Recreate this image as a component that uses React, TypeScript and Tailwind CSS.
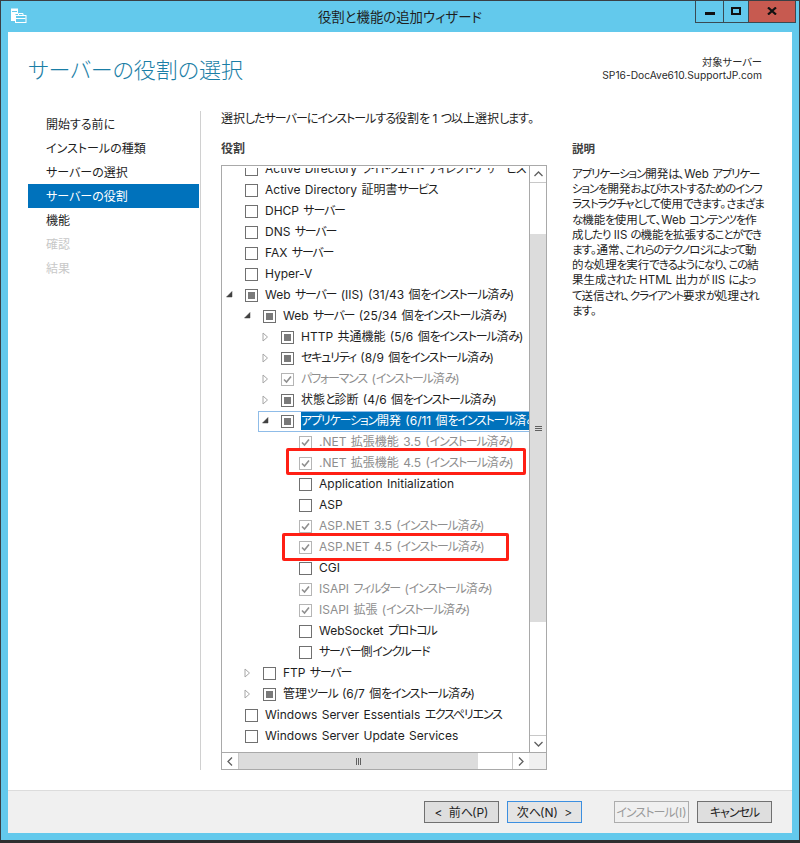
type Check = 'none' | 'mixed' | 'checked';
type Row = {
  level: number;
  label: string;
  check: Check;
  arrow?: 'open' | 'closed';
  disabled?: boolean;
  selected?: boolean;
};

const rows: Row[] = [
  { level: 0, label: 'Active Directory ライトウェイト ディレクトリ サービス', check: 'none' },
  { level: 0, label: 'Active Directory 証明書サービス', check: 'none' },
  { level: 0, label: 'DHCP サーバー', check: 'none' },
  { level: 0, label: 'DNS サーバー', check: 'none' },
  { level: 0, label: 'FAX サーバー', check: 'none' },
  { level: 0, label: 'Hyper-V', check: 'none' },
  { level: 0, label: 'Web サーバー (IIS) (31/43 個をインストール済み)', check: 'mixed', arrow: 'open' },
  { level: 1, label: 'Web サーバー (25/34 個をインストール済み)', check: 'mixed', arrow: 'open' },
  { level: 2, label: 'HTTP 共通機能 (5/6 個をインストール済み)', check: 'mixed', arrow: 'closed' },
  { level: 2, label: 'セキュリティ (8/9 個をインストール済み)', check: 'mixed', arrow: 'closed' },
  { level: 2, label: 'パフォーマンス (インストール済み)', check: 'checked', arrow: 'closed', disabled: true },
  { level: 2, label: '状態と診断 (4/6 個をインストール済み)', check: 'mixed', arrow: 'closed' },
  { level: 2, label: 'アプリケーション開発 (6/11 個をインストール済み)', check: 'mixed', arrow: 'open', selected: true },
  { level: 3, label: '.NET 拡張機能 3.5 (インストール済み)', check: 'checked', disabled: true },
  { level: 3, label: '.NET 拡張機能 4.5 (インストール済み)', check: 'checked', disabled: true },
  { level: 3, label: 'Application Initialization', check: 'none' },
  { level: 3, label: 'ASP', check: 'none' },
  { level: 3, label: 'ASP.NET 3.5 (インストール済み)', check: 'checked', disabled: true },
  { level: 3, label: 'ASP.NET 4.5 (インストール済み)', check: 'checked', disabled: true },
  { level: 3, label: 'CGI', check: 'none' },
  { level: 3, label: 'ISAPI フィルター (インストール済み)', check: 'checked', disabled: true },
  { level: 3, label: 'ISAPI 拡張 (インストール済み)', check: 'checked', disabled: true },
  { level: 3, label: 'WebSocket プロトコル', check: 'none' },
  { level: 3, label: 'サーバー側インクルード', check: 'none' },
  { level: 1, label: 'FTP サーバー', check: 'none', arrow: 'closed' },
  { level: 1, label: '管理ツール (6/7 個をインストール済み)', check: 'mixed', arrow: 'closed' },
  { level: 0, label: 'Windows Server Essentials エクスペリエンス', check: 'none' },
  { level: 0, label: 'Windows Server Update Services', check: 'none' },
];

const steps = [
  { label: '開始する前に' },
  { label: 'インストールの種類' },
  { label: 'サーバーの選択' },
  { label: 'サーバーの役割', active: true },
  { label: '機能' },
  { label: '確認', disabled: true },
  { label: '結果', disabled: true },
];

const description = [
  'アプリケーション開発は、Web アプリケー',
  'ションを開発およびホストするためのインフ',
  'ラストラクチャとして使用できます。さまざま',
  'な機能を使用して、Web コンテンツを作',
  '成したり IIS の機能を拡張することができ',
  'ます。通常、これらのテクノロジによって動',
  '的な処理を実行できるようになり、この結',
  '果生成された HTML 出力が IIS によっ',
  'て送信され、クライアント要求が処理され',
  'ます。',
];

// kana are much narrower than kanji in the reference font, so squeeze only those runs
function Squeezed({ text, kana }: { text: string; kana: string }) {
  const parts = text.split(/([\u3040-\u30ff]+)/);
  return (
    <>
      {parts.map((part, i) =>
        i % 2 === 1 ? (
          <span key={i} className={kana}>
            {part}
          </span>
        ) : (
          part
        ),
      )}
    </>
  );
}

function CheckBox({ check, disabled }: { check: Check; disabled?: boolean }) {
  return (
    <span
      className={`mt-[2px] flex h-[13px] w-[13px] shrink-0 items-center justify-center border bg-white ${
        disabled ? 'border-[#b5b5b5]' : 'border-[#707070]'
      }`}
    >
      {check === 'mixed' && <span className="h-[7px] w-[7px] bg-[#7a7a7a]" />}
      {check === 'checked' && (
        <svg width="11" height="11" viewBox="0 0 11 11" fill="none">
          <path d="M2 5.5 L4.5 8 L9 2.5" stroke="#8f8f8f" strokeWidth="1.6" />
        </svg>
      )}
    </span>
  );
}

function TreeArrow({ arrow }: { arrow?: 'open' | 'closed' }) {
  if (arrow === 'open') {
    return (
      <svg width="7" height="7" viewBox="0 0 7 7" className="shrink-0">
        <path d="M6 0.5 V6 H0.5 Z" fill="#404040" stroke="#404040" strokeWidth="0.5" />
      </svg>
    );
  }
  if (arrow === 'closed') {
    return (
      <svg width="7" height="10" viewBox="0 0 7 10" className="shrink-0">
        <path d="M1 1 L5.5 5 L1 9 Z" fill="#fff" stroke="#a6a6a6" />
      </svg>
    );
  }
  return <span className="w-[7px] shrink-0" />;
}

function TreeRow({ row }: { row: Row }) {
  const indent = ['pl-[4px]', 'pl-[22px]', 'pl-[40px]', 'pl-[58px]'][row.level];
  return (
    <div className={`flex h-[21px] items-center whitespace-nowrap [word-spacing:1px] ${indent}`}>
      <span className="flex w-[19px] shrink-0 items-center">
        <TreeArrow arrow={row.arrow} />
      </span>
      <CheckBox check={row.check} disabled={row.disabled} />
      <span
        className={`ml-[7px] ${row.disabled ? 'text-[#8e8e8e]' : 'text-[#1e1e1e]'} ${
          row.selected ? 'bg-[#0072bc] text-white' : ''
        }`}
      >
        <Squeezed text={row.label} kana="tracking-[-1.2px]" />
      </span>
    </div>
  );
}

function ScrollButton({ d, className }: { d: string; className: string }) {
  return (
    <div className={`flex shrink-0 items-center justify-center bg-white ${className}`}>
      <svg width="9" height="6" viewBox="0 0 9 6" fill="none">
        <path d={d} stroke="#606060" strokeWidth="1.3" />
      </svg>
    </div>
  );
}

function WizardButton({ label, state }: { label: string; state?: 'focus' | 'disabled' }) {
  const cls =
    state === 'focus'
      ? 'border-[#3c8fe0] bg-[#e4e4e4] text-[#1e1e1e]'
      : state === 'disabled'
        ? 'border-[#adadad] bg-[#f0f0f0] text-[#9a9a9a]'
        : 'border-[#707070] bg-[#dedede] text-[#1e1e1e]';
  return (
    <div
      className={`flex h-[22px] w-[75px] items-center justify-center whitespace-nowrap border pt-[2px] text-[12px] [word-spacing:3px] ${cls}`}
    >
      <Squeezed text={label} kana="tracking-[-1px]" />
    </div>
  );
}

export default function App() {
  return (
    <div className="h-[843px] w-[800px] overflow-hidden bg-[#2f2f2f] pb-[3px] font-['Inter','Noto_Sans_CJK_JP',sans-serif] text-[12px] [font-feature-settings:'palt']">
      <div className="flex h-[840px] flex-col border border-b-0 border-[#3a3f44] bg-[#63c9ec] px-[7px] pb-[7px]">
        {/* Title bar */}
        <div className="relative flex h-[31px] shrink-0 items-center justify-center pt-[1px] text-[13.4px] text-[#1e1e1e]">
          <svg width="17" height="17" viewBox="0 0 17 17" className="absolute left-[2px] top-[7px]" fill="none">
            <path d="M1 0.5 H8 V6 H5.5 V13 H1 Z" fill="#fff" />
            <rect x="2" y="3" width="5" height="1" fill="#63c9ec" />
            <rect x="5.5" y="7.5" width="10.5" height="7" fill="#63c9ec" stroke="#fff" />
            <path d="M8.5 7 V5.5 H13 V7" stroke="#fff" />
            <path d="M6 10.5 H15.5" stroke="#fff" />
          </svg>
          <span>役割と機能の追加ウィザード</span>
          <div className="absolute right-[-4px] top-0 flex h-[22px] border border-t-0 border-[#3a4a52]">
            <div className="flex w-[28px] items-center justify-center border-r border-[#3a4a52]">
              <span className="mt-[4px] h-[3px] w-[10px] bg-[#111]" />
            </div>
            <div className="flex w-[25px] items-center justify-center border-r border-[#3a4a52]">
              <span className="mb-[2px] h-[8px] w-[10px] border-2 border-[#111]" />
            </div>
            <div className="flex w-[46px] items-center justify-center bg-[#c75a50]">
              <svg width="10" height="8" viewBox="0 0 10 8" className="mb-[2px]">
                <path d="M1 0.5 L9 7.5 M9 0.5 L1 7.5" stroke="#111" strokeWidth="2.2" />
              </svg>
            </div>
          </div>
        </div>

        {/* Client area */}
        <div className="flex min-h-0 flex-1 flex-col bg-white">
          <div className="flex h-[79px] shrink-0 items-start justify-between pl-[20px] pr-[30px]">
            <h1 className="mt-[22px] text-[22px] font-light leading-[32px] text-[#1a7ea6]">サーバーの役割の選択</h1>
            <div className="mt-[24px] text-right text-[10.25px] leading-[13px] text-[#2a2a2a]">
              <div>対象サーバー</div>
              <div>SP16-DocAve610.SupportJP.com</div>
            </div>
          </div>

          <div className="flex min-h-0 flex-1">
            <nav className="w-[192px] shrink-0 pl-[20px] pr-px pt-[1px]">
              {steps.map((s) => (
                <div
                  key={s.label}
                  className={`flex h-[24px] items-center pl-[18px] pt-[2px] ${
                    s.active ? 'bg-[#0072bc] text-white' : s.disabled ? 'text-[#c8c8c8]' : 'text-[#1e1e1e]'
                  }`}
                >
                  {s.label}
                </div>
              ))}
            </nav>
            <div className="mb-[20px] w-px shrink-0 bg-[#d0d0d0]" />

            <div className="flex min-w-0 flex-1 flex-col pl-[20px] pr-[27px]">
              <p className="mt-[-1px] text-[#1e1e1e]">
                <Squeezed text="選択したサーバーにインストールする役割を 1 つ以上選択します。" kana="tracking-[-1px]" />
              </p>
              <div className="mt-[11px] flex min-h-0 flex-1">
                <div className="flex w-[326px] shrink-0 flex-col">
                  <h2 className="h-[26px] text-[12px] font-bold leading-[20px] text-[#404040]">役割</h2>
                  <div className="relative flex h-[605px] flex-col border border-[#a9a9a9]">
                    <div className="flex min-h-0 flex-1">
                      <div className="relative mt-[2px] min-w-0 flex-1 overflow-hidden">
                        <div className="mt-[-10px]">
                          {rows.map((r) => (
                            <TreeRow key={r.label} row={r} />
                          ))}
                        </div>
                        {/* selection outline on the focused row */}
                        <div className="absolute left-[36px] right-0 top-[243px] h-[21px] border border-r-0 border-[#8fbce8]" />
                        {/* red annotations */}
                        <div className="absolute left-[64px] top-[280px] h-[27px] w-[240px] rounded-[2px] border-[3px] border-[#ff1f14]" />
                        <div className="absolute left-[60px] top-[365px] h-[28px] w-[227px] rounded-[2px] border-[3px] border-[#ff1f14]" />
                      </div>
                      {/* vertical scrollbar */}
                      <div className="flex w-[17px] shrink-0 flex-col border-l border-[#a9a9a9] bg-white">
                        <ScrollButton d="M0.5 5 L4.5 1 L8.5 5" className="h-[17px] border-b border-[#c8c8c8]" />
                        <div className="h-[51px] shrink-0" />
                        <div className="flex h-[388px] shrink-0 items-center justify-center bg-[#dcdcdc]">
                          <div className="flex w-[7px] flex-col gap-px">
                            <span className="h-px bg-[#606060]" />
                            <span className="h-px bg-[#606060]" />
                            <span className="h-px bg-[#606060]" />
                          </div>
                        </div>
                        <div className="flex-1" />
                        <ScrollButton d="M0.5 1 L4.5 5 L8.5 1" className="h-[17px] border-t border-[#c8c8c8]" />
                      </div>
                    </div>
                    {/* horizontal scrollbar */}
                    <div className="flex h-[17px] shrink-0 border-t border-[#a9a9a9]">
                      <div className="flex w-[17px] shrink-0 items-center justify-center border-r border-[#c8c8c8]">
                        <svg width="6" height="9" viewBox="0 0 6 9" fill="none">
                          <path d="M5 0.5 L1 4.5 L5 8.5" stroke="#606060" strokeWidth="1.3" />
                        </svg>
                      </div>
                      <div className="flex w-[239px] shrink-0 items-center justify-center bg-[#dcdcdc]">
                        <div className="flex h-[7px] gap-px">
                          <span className="w-px bg-[#606060]" />
                          <span className="w-px bg-[#606060]" />
                          <span className="w-px bg-[#606060]" />
                        </div>
                      </div>
                      <div className="flex-1" />
                      <div className="flex w-[17px] shrink-0 items-center justify-center border-l border-[#c8c8c8]">
                        <svg width="6" height="9" viewBox="0 0 6 9" fill="none">
                          <path d="M1 0.5 L5 4.5 L1 8.5" stroke="#606060" strokeWidth="1.3" />
                        </svg>
                      </div>
                      <div className="w-[17px] shrink-0 bg-[#f0f0f0]" />
                    </div>
                  </div>
                </div>

                <div className="ml-[25px] min-w-0 flex-1">
                  <h2 className="h-[28px] text-[11.5px] font-bold leading-[20px] text-[#404040]">説明</h2>
                  <p className="whitespace-nowrap text-[11.5px] leading-[15.2px] text-[#1e1e1e]">
                    {description.map((line) => (
                      <span key={line} className="block">
                        <Squeezed text={line} kana="tracking-[-1.1px]" />
                      </span>
                    ))}
                  </p>
                </div>
              </div>
            </div>
          </div>

          {/* Footer */}
          <div className="flex h-[43px] shrink-0 items-center border-t border-[#dcdcdc] bg-[#f0f0f0] pr-[20px]">
            <div className="ml-auto flex items-center">
              <WizardButton label="< 前へ(P)" />
              <div className="ml-[8px]">
                <WizardButton label="次へ(N) >" state="focus" />
              </div>
              <div className="ml-[32px]">
                <WizardButton label="インストール(I)" state="disabled" />
              </div>
              <div className="ml-[8px]">
                <WizardButton label="キャンセル" />
              </div>
            </div>
          </div>
        </div>
      </div>
    </div>
  );
}
